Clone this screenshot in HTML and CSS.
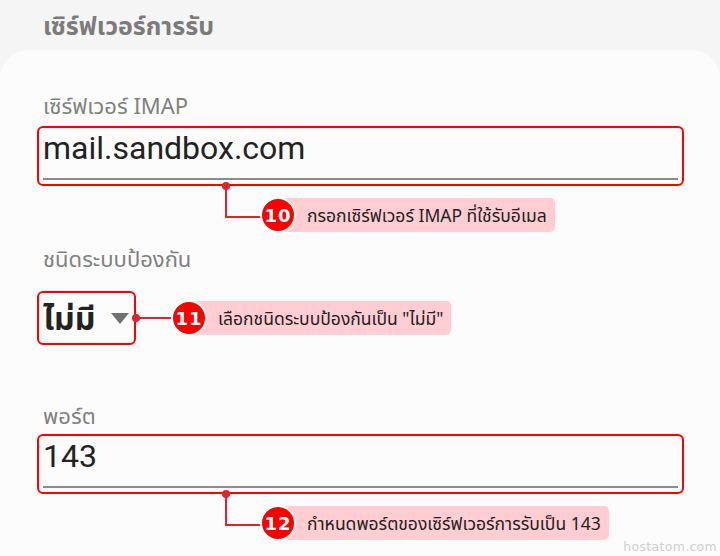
FILE: index.html
```html
<!DOCTYPE html>
<html lang="th">
<head>
<meta charset="utf-8">
<link rel="stylesheet" href="styles.css">
</head>
<body>
<div class="page">
  <div class="header">เซิร์ฟเวอร์การรับ</div>
  <div class="card">
    <div class="label l1">เซิร์ฟเวอร์ IMAP</div>
    <div class="field input">
      <div class="value">mail.sandbox.com</div>
      <div class="underline"></div>
      <div class="callout down c10">
        <span class="dot"></span>
        <span class="badge">10</span>
        <span class="tip">กรอกเซิร์ฟเวอร์ IMAP ที่ใช้รับอีเมล</span>
      </div>
    </div>

    <div class="label l2">ชนิดระบบป้องกัน</div>
    <div class="field select">
      <span class="sel-value">ไม่มี</span>
      <span class="arrow"></span>
      <div class="callout side c11">
        <span class="dot"></span>
        <span class="badge">11</span>
        <span class="tip">เลือกชนิดระบบป้องกันเป็น "ไม่มี"</span>
      </div>
    </div>

    <div class="label l3">พอร์ต</div>
    <div class="field input">
      <div class="value">143</div>
      <div class="underline"></div>
      <div class="callout down c12">
        <span class="dot"></span>
        <span class="badge">12</span>
        <span class="tip">กำหนดพอร์ตของเซิร์ฟเวอร์การรับเป็น 143</span>
      </div>
    </div>
  </div>
  <div class="watermark">hostatom.com</div>
</div>
</body>
</html>
```

FILE: styles.css
```css
* { box-sizing: border-box; }
html, body { margin: 0; padding: 0; }
body {
  width: 720px;
  height: 556px;
  overflow: hidden;
  background: #f5f5f5;
  font-family: "Noto Sans", "Noto Sans Thai", Roboto, sans-serif;
}
.page {
  position: relative;
  width: 720px;
  height: 556px;
  display: flex;
  flex-direction: column;
}
.header {
  height: 50px;
  padding: 9px 0 0 43px;
  font-size: 25px;
  line-height: 32px;
  font-weight: 700;
  color: #7b7b7b;
}
.card {
  flex: 1;
  background: #fcfcfc;
  border-radius: 28px 28px 0 0;
  padding: 40px 36px 0 37px;
  display: flex;
  flex-direction: column;
  align-items: flex-start;
}
.label {
  font-size: 22px;
  line-height: 30px;
  color: #808080;
  padding-left: 6px;
}
.l1 { margin-bottom: 6px; }
.l2 { margin-top: 57px; margin-bottom: 18px; }
.l3 { margin-top: 55px; margin-bottom: 4px; }

.field {
  position: relative;
  border: 2px solid #ff0000;
  border-radius: 6px;
}
.input {
  width: 647px;
  height: 60px;
  padding: 0 4px;
}
.value {
  font-family: Roboto, sans-serif;
  font-size: 32px;
  line-height: 40px;
  color: #222;
}
.underline {
  position: absolute;
  left: 4px;
  right: 4px;
  bottom: 4px;
  height: 2px;
  background: #8c8c8c;
}
.select {
  width: 99px;
  height: 54px;
  display: flex;
  align-items: center;
  padding-left: 4px;
}
.sel-value {
  font-size: 32px;
  font-weight: 700;
  color: #222;
  line-height: 40px;
}
.arrow {
  margin-left: 16px;
  width: 0;
  height: 0;
  border-left: 9px solid transparent;
  border-right: 9px solid transparent;
  border-top: 11px solid #707070;
}

/* annotations */
.callout {
  position: absolute;
  display: flex;
  align-items: center;
  height: 36px;
}
.dot {
  position: absolute;
  width: 8px;
  height: 8px;
  border-radius: 50%;
  background: #e8202a;
}
.badge {
  position: relative;
  z-index: 2;
  width: 36px;
  height: 36px;
  border-radius: 50%;
  background: #ff0000;
  border: 2px solid #fff;
  color: #fff;
  font-family: "DejaVu Sans", sans-serif;
  font-weight: 700;
  font-size: 18px;
  display: flex;
  align-items: center;
  justify-content: center;
  letter-spacing: 1px;
}
.tip {
  position: relative;
  z-index: 1;
  margin-left: -11px;
  height: 34px;
  padding: 0 8px 0 22px;
  background: #ffcdd2;
  border-radius: 0 5px 5px 0;
  font-size: 17.5px;
  line-height: 34px;
  color: #222;
  white-space: nowrap;
}
.down {
  left: 183px;
  top: 69px;
  padding-left: 38px;
}
.down::before {
  content: "";
  position: absolute;
  left: 3px;
  top: -11px;
  width: 38px;
  height: 30px;
  border-left: 2px solid #e8202a;
  border-bottom: 2px solid #e8202a;
}
.down .dot { left: 0; top: -15px; }
.side {
  left: 95px;
  top: 7px;
  padding-left: 37px;
}
.side::before {
  content: "";
  position: absolute;
  left: 2px;
  top: 17px;
  width: 38px;
  height: 2px;
  background: #e8202a;
}
.side .dot { left: -2px; top: 14px; }

.watermark {
  position: absolute;
  right: 3px;
  bottom: 2px;
  font-family: "DejaVu Sans", sans-serif;
  font-size: 12.5px;
  color: #cfcfcf;
  letter-spacing: 0.3px;
}
```
